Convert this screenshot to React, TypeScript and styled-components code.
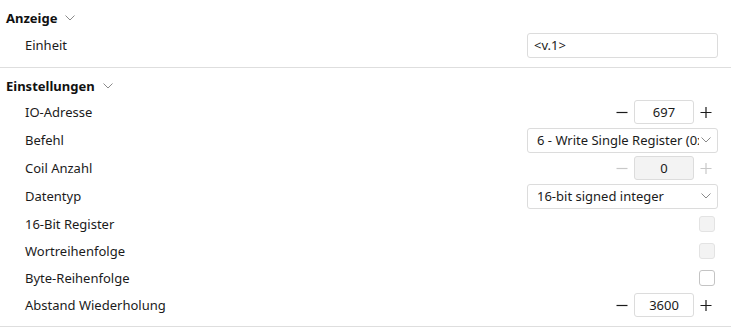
import React from "react";
import styled, { createGlobalStyle } from "styled-components";

const GlobalStyle = createGlobalStyle`
  html, body {
    margin: 0;
    padding: 0;
    background: #ffffff;
  }
  body {
    font-family: "Noto Sans", "Open Sans", sans-serif;
    font-size: 13px;
    color: #1b1b1b;
  }
`;

const Page = styled.div`
  width: 731px;
`;

const Section = styled.section`
  padding: 6px 13px 7px 0;
  border-bottom: 1px solid #dedede;
`;

const SectionHeader = styled.div`
  display: flex;
  align-items: center;
  gap: 8px;
  height: 24px;
  padding-left: 6px;
  font-weight: 700;
  color: #111;
`;

const Row = styled.div<{ $height?: number }>`
  display: flex;
  align-items: center;
  justify-content: space-between;
  height: ${(p) => p.$height ?? 28}px;
  padding-left: 25px;
`;

const Label = styled.span`
  color: #1b1b1b;
`;

const TextInput = styled.div`
  box-sizing: border-box;
  width: 191px;
  height: 25px;
  border: 1px solid #dcdcdc;
  border-radius: 3px;
  padding: 0 6px;
  display: flex;
  align-items: center;
`;

const Select = styled.div`
  box-sizing: border-box;
  width: 191px;
  height: 25px;
  border: 1px solid #dcdcdc;
  border-radius: 3px;
  padding: 0 6px 0 9px;
  display: flex;
  align-items: center;
  gap: 2px;
`;

const SelectText = styled.span`
  flex: 1;
  overflow: hidden;
  white-space: nowrap;
  text-overflow: clip;
`;

const Spin = styled.div`
  display: flex;
  align-items: center;
`;

const SpinButton = styled.span<{ $disabled?: boolean }>`
  width: 24px;
  height: 24px;
  display: flex;
  align-items: center;
  justify-content: center;
  color: ${(p) => (p.$disabled ? "#c8c8c8" : "#1b1b1b")};
`;

const SpinValue = styled.div<{ $disabled?: boolean }>`
  box-sizing: border-box;
  width: 60px;
  height: 24px;
  border: 1px solid #dcdcdc;
  border-radius: 3px;
  background: ${(p) => (p.$disabled ? "#f3f3f3" : "#fff")};
  display: flex;
  align-items: center;
  justify-content: center;
`;

const Checkbox = styled.span<{ $disabled?: boolean }>`
  box-sizing: border-box;
  width: 16px;
  height: 16px;
  margin-right: 3px;
  border: 1px solid ${(p) => (p.$disabled ? "#e3e3e3" : "#c4c4c4")};
  border-radius: 3px;
  background: ${(p) => (p.$disabled ? "#f3f3f3" : "#fff")};
`;

const Chevron = ({ color = "#8a8a8a" }: { color?: string }) => (
  <svg width="10" height="6" viewBox="0 0 10 6" fill="none">
    <path d="M0.5 0.5 L5 5 L9.5 0.5" stroke={color} strokeWidth="1" />
  </svg>
);

const Minus = () => (
  <svg width="12" height="12" viewBox="0 0 12 12">
    <path d="M0.5 6.5 H11.5" stroke="currentColor" strokeWidth="1.2" />
  </svg>
);

const Plus = () => (
  <svg width="12" height="12" viewBox="0 0 12 12">
    <path d="M0.5 6.5 H11.5 M6 1 V12" stroke="currentColor" strokeWidth="1.2" />
  </svg>
);

const Stepper = ({ value, disabled }: { value: string; disabled?: boolean }) => (
  <Spin>
    <SpinButton $disabled={disabled}>
      <Minus />
    </SpinButton>
    <SpinValue $disabled={disabled}>{value}</SpinValue>
    <SpinButton $disabled={disabled}>
      <Plus />
    </SpinButton>
  </Spin>
);

const Dropdown = ({ value }: { value: string }) => (
  <Select>
    <SelectText>{value}</SelectText>
    <Chevron />
  </Select>
);

export default function App() {
  return (
    <Page>
      <GlobalStyle />
      <Section>
        <SectionHeader>
          Anzeige <Chevron />
        </SectionHeader>
        <Row $height={30}>
          <Label>Einheit</Label>
          <TextInput>&lt;v.1&gt;</TextInput>
        </Row>
      </Section>
      <Section>
        <SectionHeader>
          Einstellungen <Chevron />
        </SectionHeader>
        <Row>
          <Label>IO-Adresse</Label>
          <Stepper value="697" />
        </Row>
        <Row>
          <Label>Befehl</Label>
          <Dropdown value="6 - Write Single Register (0x06)" />
        </Row>
        <Row>
          <Label>Coil Anzahl</Label>
          <Stepper value="0" disabled />
        </Row>
        <Row>
          <Label>Datentyp</Label>
          <Dropdown value="16-bit signed integer" />
        </Row>
        <Row $height={27}>
          <Label>16-Bit Register</Label>
          <Checkbox $disabled />
        </Row>
        <Row $height={27}>
          <Label>Wortreihenfolge</Label>
          <Checkbox $disabled />
        </Row>
        <Row $height={27}>
          <Label>Byte-Reihenfolge</Label>
          <Checkbox />
        </Row>
        <Row>
          <Label>Abstand Wiederholung</Label>
          <Stepper value="3600" />
        </Row>
      </Section>
    </Page>
  );
}
